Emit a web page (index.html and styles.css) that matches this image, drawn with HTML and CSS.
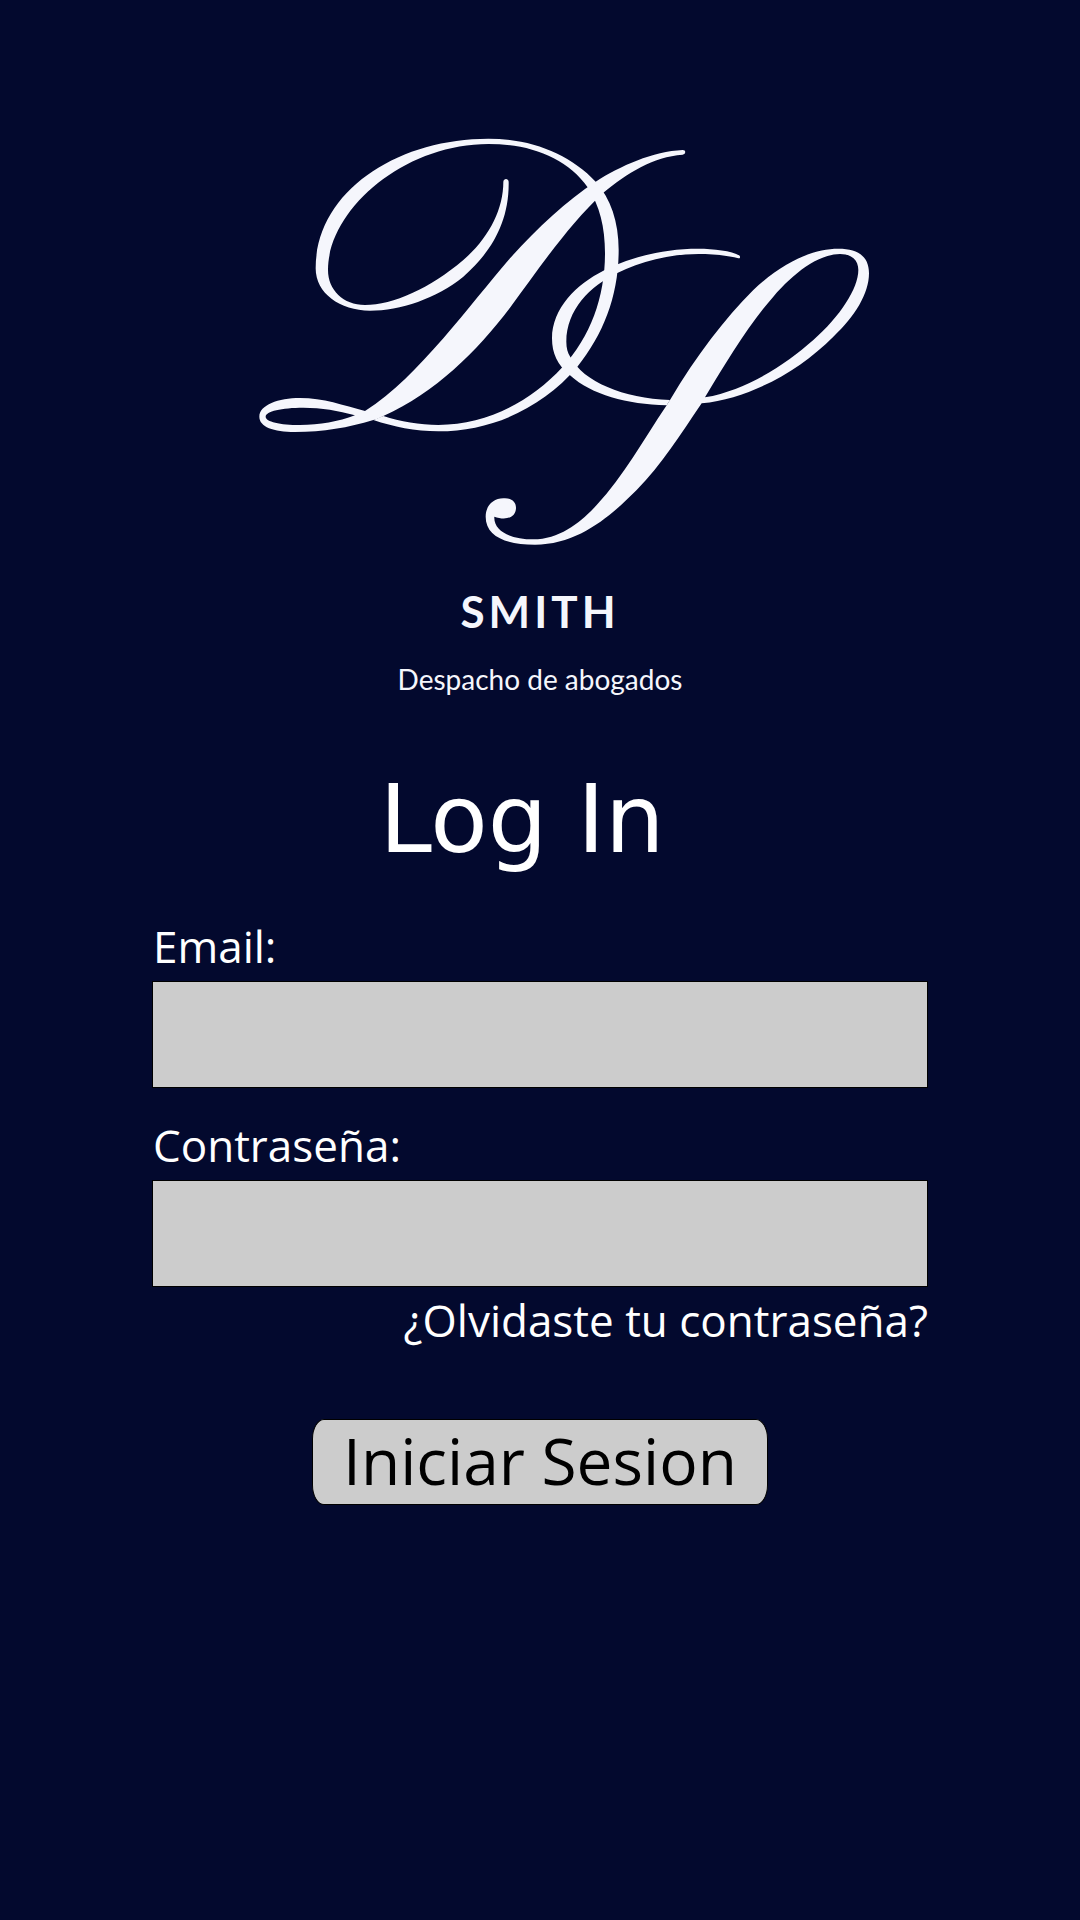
FILE: index.html
```html
<!DOCTYPE html>
<html lang="es">
<head>
  <meta charset="utf-8">
  <meta name="viewport" content="width=device-width, initial-scale=1">
  <title>Smith - Log In</title>
  <link rel="stylesheet" href="styles.css">
</head>
<body>
  <main class="page">
    <header class="brand">
      <svg class="monogram" viewBox="-150 0 2040 1320" role="img" aria-label="DS">
        <!-- Upper loop and bowl -->
        <path d="M776 185C778 310 720 400 640 470C560 535 450 572 360 572C270 572 197 520 197 445C197 215 440 56 715 56C845 56 960 103 1037 185C1082 235 1106 305 1106 390C1106 525 1062 640 981 742C877 864 725 934 565 934C495 934 430 920 370 900L400 888C450 904 510 915 565 915C710 915 842 845 937 742C1022 650 1065 530 1065 400C1065 320 1049 258 1014 203C950 112 840 72 715 72C460 72 234 270 234 450C234 510 280 555 345 555C430 555 540 505 640 420C715 355 760 270 760 185C761 174 775 174 776 185Z"/>
        <!-- Stem and foot loop -->
        <path fill-rule="evenodd" d="M345 873C280 856 220 834 150 834C85 834 28 855 28 890C28 920 70 936 135 936C220 936 295 923 370 900C385 896 392 892 400 888C555 818 680 695 780 563C865 448 955 315 1060 218C1130 160 1210 110 1298 104Q1306 103 1306 96Q1306 90 1298 90C1210 94 1110 138 1037 185C950 242 855 330 780 415C720 484 650 575 580 655C500 745 430 820 345 873ZM315 886C265 872 215 863 160 863C95 863 47 874 47 890C47 905 90 915 150 915C210 915 265 905 315 886Z"/>
        <!-- Entry stroke of the second letter -->
        <path d="M1465 415C1435 406 1385 402 1345 402C1260 402 1170 425 1102 459C1020 498 949 570 949 665C949 685 953 698 961 711C1000 785 1120 835 1260 840L1250 856C1130 853 1025 825 960 766C922 735 906 700 906 655C906 565 980 492 1060 452C1145 410 1240 386 1345 386C1390 386 1445 392 1469 407Q1473 415 1465 415Z"/>
        <!-- Second stem with its head loop and ball terminal -->
        <path fill-rule="evenodd" d="M1260 840C1340 705 1425 595 1510 510C1600 425 1690 386 1765 386C1825 386 1857 410 1857 460C1857 520 1815 590 1750 650C1645 755 1500 835 1355 850C1290 945 1235 1035 1160 1110C1090 1180 990 1274 855 1274C770 1274 707 1250 707 1190C707 1157 730 1135 760 1135C783 1133 798 1145 798 1163C798 1195 765 1202 733 1190C730 1235 785 1258 850 1258C930 1258 995 1205 1040 1155C1120 1070 1180 960 1250 856ZM1365 832C1490 810 1605 735 1690 660C1770 590 1825 505 1825 450C1825 420 1805 402 1770 402C1705 402 1630 460 1570 530C1495 615 1430 725 1365 832Z"/>
      </svg>
      <p class="brand-name">SMITH</p>
      <p class="brand-tagline">Despacho de abogados</p>
    </header>

    <form class="login">
      <h1 class="title">Log In</h1>
      <div class="field">
        <label class="label" for="email">Email:</label>
        <input class="input" id="email" name="email" type="email">
      </div>
      <div class="field">
        <label class="label" for="password">Contraseña:</label>
        <input class="input" id="password" name="password" type="password">
      </div>
      <a class="forgot" href="#">¿Olvidaste tu contraseña?</a>
      <button class="submit" type="submit">Iniciar Sesion</button>
    </form>
  </main>
</body>
</html>
```
FILE: styles.css
```css
* {
  box-sizing: border-box;
}

body {
  margin: 0;
  min-height: 100vh;
  background: #03092e;
  color: #fff;
  font-family: "Open Sans", "Noto Sans", sans-serif;
}

.page {
  padding: 120px 152px 80px;
}

.brand {
  display: flex;
  flex-direction: column;
  align-items: center;
  color: #f5f6fc;
  font-family: Lato, sans-serif;
}

.monogram {
  width: 680px;
  max-width: 100%;
  fill: currentColor;
}

.brand-name {
  margin: 23px 0 0;
  font-size: 44px;
  font-weight: 700;
  line-height: 56px;
  letter-spacing: 4px;
}

.brand-tagline {
  margin: 20px 0 0;
  font-size: 28px;
  line-height: 40px;
}

.login {
  display: flex;
  flex-direction: column;
}

.title {
  margin: 61px 0 38px;
  padding-right: 36px;
  font-family: "DejaVu Sans", sans-serif;
  font-size: 94px;
  font-weight: 400;
  line-height: 120px;
  text-align: center;
}

.field {
  display: flex;
  flex-direction: column;
  margin-bottom: 29px;
}

.label {
  padding: 0 0 7px 1px;
  font-size: 44px;
  line-height: 56px;
}

.input {
  width: 100%;
  height: 107px;
  padding: 0 24px;
  border: 1px solid #000;
  border-radius: 0;
  background: #ccc;
  color: #000;
  font: inherit;
  font-size: 44px;
}

.forgot {
  align-self: flex-end;
  margin-top: -24px;
  color: inherit;
  font-size: 44px;
  line-height: 56px;
  text-decoration: none;
}

.submit {
  align-self: center;
  margin-top: 71px;
  padding: 0 30px 2px;
  border: 1px solid #000;
  border-radius: 12px / 20px;
  background: #ccc;
  color: #000;
  font: inherit;
  font-size: 64px;
  line-height: 82px;
}
```
